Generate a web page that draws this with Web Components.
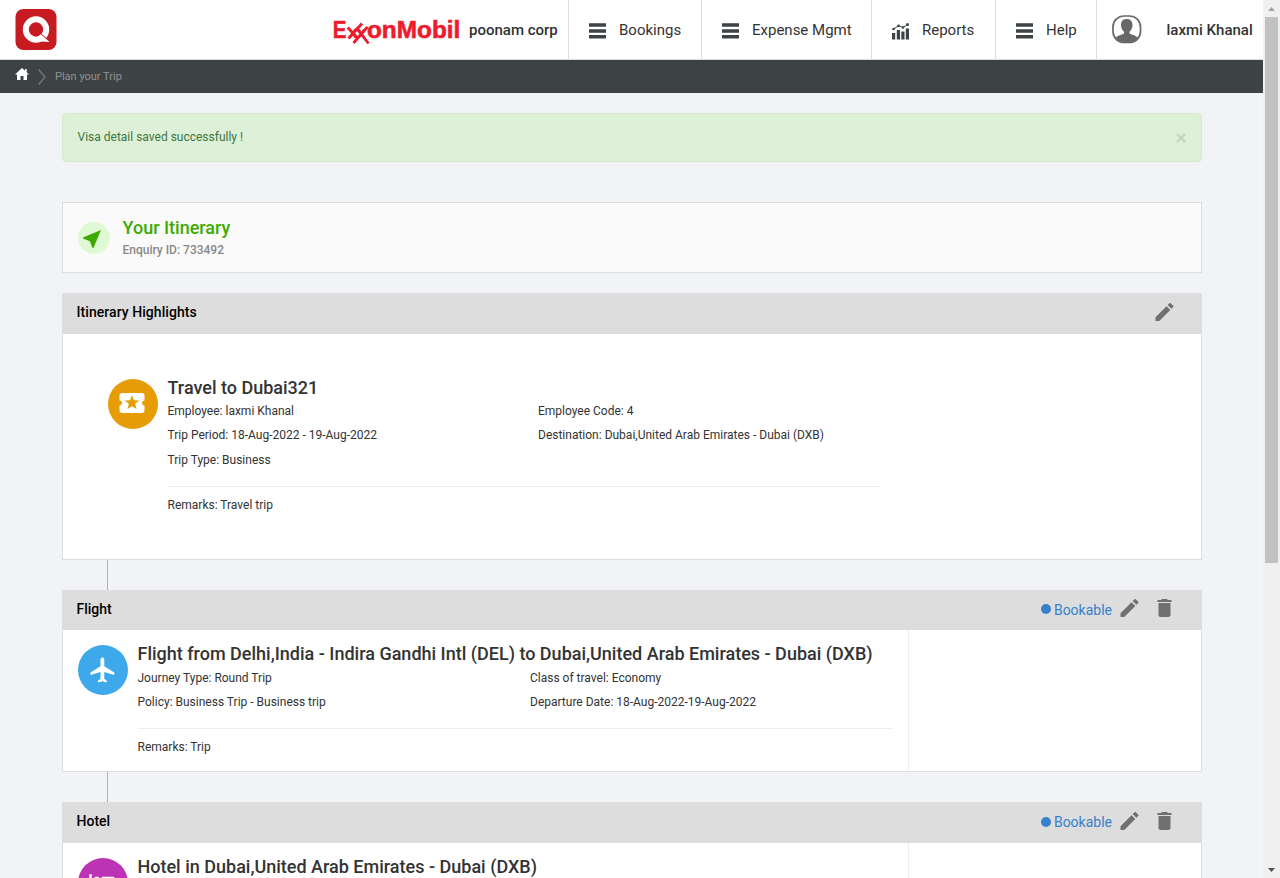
<!DOCTYPE html>
<html lang="en"><head><meta charset="utf-8"><title>Plan your Trip</title>
<style>
html,body{margin:0;height:878px;overflow:hidden}
body{background:#f2f3f7;font-family:Roboto,sans-serif;font-size:12px;color:#333;display:grid;grid-template-columns:1263px 17px}
main{padding:20px 61.5px 0;display:block}
.page{height:878px;overflow:hidden}
</style></head><body>
<div class="page">
<app-header></app-header>
<crumb-bar>Plan your Trip</crumb-bar>
<main>
<flash-alert>Visa detail saved successfully !</flash-alert>
<itinerary-title><span slot="title">Your Itinerary</span><span slot="sub">Enquiry ID: 733492</span></itinerary-title>
<trip-section label="Itinerary Highlights" wide style="--head:41px;--h:267px;--track:.06px">
  <trip-detail icon="ticket" color="#e69c05" col="370.5" heading="Travel to Dubai321">
    <span>Employee: laxmi Khanal</span><span>Employee Code: 4</span>
    <span>Trip Period: 18-Aug-2022 - 19-Aug-2022</span><span>Destination: Dubai,United Arab Emirates - Dubai (DXB)</span>
    <span>Trip Type: Business</span>
    <span slot="remarks">Remarks: Travel trip</span>
  </trip-detail>
</trip-section>
<trip-link></trip-link>
<trip-section label="Flight" bookable style="--head:40px;--h:182px;--drop:2px">
  <trip-detail icon="plane" color="#3ea9ea" col="392.5" heading="Flight from Delhi,India - Indira Gandhi Intl (DEL) to Dubai,United Arab Emirates - Dubai (DXB)">
    <span>Journey Type: Round Trip</span><span>Class of travel: Economy</span>
    <span>Policy: Business Trip - Business trip</span><span>Departure Date: 18-Aug-2022-19-Aug-2022</span>
    <span slot="remarks">Remarks: Trip</span>
  </trip-detail>
</trip-section>
<trip-link></trip-link>
<trip-section label="Hotel" bookable style="--head:41px;--h:182px">
  <trip-detail icon="hotel" color="#bd33b5" col="392.5" heading="Hotel in Dubai,United Arab Emirates - Dubai (DXB)"></trip-detail>
</trip-section>
</main>
</div>
<scroll-rail></scroll-rail>
<script>
const define = (name, render) => customElements.define(name, class extends HTMLElement {
  connectedCallback() {
    if (!this.shadowRoot) this.attachShadow({mode: 'open'}).innerHTML = render(this);
  }
});

const icons = {
  edit: '<path d="M3 17.25V21h3.75L17.81 9.94l-3.75-3.75L3 17.25zM20.71 7.04a1 1 0 0 0 0-1.41l-2.34-2.34a1 1 0 0 0-1.41 0l-1.83 1.83 3.75 3.75 1.83-1.83z"/>',
  trash: '<path d="M6 19c0 1.100.9 2 2 2h8c1.100 0 2-.9 2-2V7H6v12zM19 4h-3.500l-1-1h-5l-1 1H5v2h14V4z"/>',
  ticket: '<path fill-rule="evenodd" d="M20 12c0-1.100.9-2 2-2V6c0-1.100-.9-2-2-2H4c-1.100 0-1.990.9-1.990 2v4c1.100 0 1.990.9 1.990 2s-.89 2-2 2v4c0 1.100.9 2 2 2h16c1.100 0 2-.9 2-2v-4c-1.100 0-2-.9-2-2zm-4.420 4.800L12 14.500l-3.580 2.300 1.080-4.120-3.290-2.690 4.240-.25L12 5.800l1.540 3.950 4.240.25-3.290 2.690 1.090 4.110z"/>',
  plane: '<path d="M21 16v-2l-8-5V3.500c0-.83-.67-1.500-1.500-1.500S10 2.670 10 3.500V9l-8 5v2l8-2.500V19l-2 1.500V22l3.500-1 3.500 1v-1.500L13 19v-5.500l8 2.500z"/>',
  hotel: '<path d="M7 13c1.660 0 3-1.340 3-3S8.660 7 7 7s-3 1.340-3 3 1.340 3 3 3zm12-6h-8v7H3V5H1v15h2v-3h18v3h2v-9c0-2.210-1.790-4-4-4z"/>',
  near: '<path d="M21 3 3 10.530v.98l6.840 2.650L12.480 21h.98L21 3z"/>',
  bars: '<path fill="#3d4245" d="M0 .3h17v3.500H0zM0 6.200h17v3.500H0zM0 11.900h17v3.500H0z"/>',
  chart: '<path fill="#3d4245" d="M0 10h3.200v6.500H0zM4.800 7H8v9.500H4.800zM9.300 8.500h3.200v8H9.300zM13.800 5.500H17v11h-3.200z"/><path d="M1.500 6 6.500 2.700l4.500 1.800 4.500-3" fill="none" stroke="#3d4245"/><g fill="#3d4245"><circle cx="1.500" cy="6" r="1.300"/><circle cx="6.500" cy="2.700" r="1.300"/><circle cx="11" cy="4.500" r="1.300"/><circle cx="15.500" cy="1.500" r="1.500"/></g>'
};
const svg = (name, size, fill = 'currentColor') => `<svg width="${size}" height="${size}" viewBox="0 0 24 24" fill="${fill}">${icons[name]}</svg>`;

define('nav-item', el => `<style>
:host{display:flex;align-items:center;height:59px;border-left:1px solid #ddd;box-sizing:border-box;padding-left:20px;font-size:15px;color:#333}
svg{margin:2px 12px 0 0;display:block;flex:none;overflow:visible}
</style><svg width="18" height="16" viewBox="0 0 18 16">${icons[el.getAttribute('icon')]}</svg><slot></slot>`);

define('app-header', () => `<style>
:host{display:flex;height:59px;background:#fff;border-bottom:1px solid #ddd;font-size:15px;color:#333}
.logo{margin:8.500px 0 0 15px;display:block}
.brand{margin-left:auto;width:235px;display:flex;align-items:center;font-weight:500}
.brand svg{display:block;margin-right:9px;flex:none;overflow:visible}
.user{width:166px;border-left:1px solid #ddd;display:flex;align-items:center;font-weight:500;white-space:nowrap}
.user svg{margin:0 24.500px 0 15px;flex:none}
</style>
<svg class="logo" width="42" height="41" viewBox="0 0 42 41"><rect x=".5" width="41" height="41" rx="8" fill="#c61b20"/><circle cx="21" cy="20.500" r="10.200" fill="none" stroke="#fff" stroke-width="6"/><path d="M20 31c4 1.200 8.500 2 14.500 2L26 25z" fill="#fff"/><path d="m26 25 6 5" stroke="#c61b20" stroke-width="1"/></svg>
<div class="brand"><svg width="127" height="29" viewBox="0 0 127 29" fill="#ed1b2e" font-family="Liberation Sans" font-weight="700" font-size="24"><text x="-.2" y="23.300" textLength="13.700" lengthAdjust="spacingAndGlyphs" stroke="#ed1b2e" stroke-width=".5">E</text><text x="15" y="23.300" textLength="18" lengthAdjust="spacingAndGlyphs" font-size="17">xx</text><path d="M14.700 12.500 25 23.500M15.500 23.500 29 8.500M23 12.500l12.500 16M20.500 28 34.500 12" fill="none" stroke="#ed1b2e" stroke-width="2.800"/><text x="34" y="23.300" textLength="93.300" lengthAdjust="spacingAndGlyphs" stroke="#ed1b2e" stroke-width=".6">onMobil</text></svg><span>poonam corp</span></div>
<nav-item icon="bars" style="width:133px">Bookings</nav-item><nav-item icon="bars" style="width:170px">Expense Mgmt</nav-item><nav-item icon="chart" style="width:124px">Reports</nav-item><nav-item icon="bars" style="width:101px">Help</nav-item>
<div class="user"><svg width="30" height="29" viewBox="0 0 30 29"><rect x="1" y="1" width="27.500" height="26.500" rx="11" fill="#fff" stroke="#686868" stroke-width="1.700"/><path d="M14.700 4c-4 0-6 2.700-5.700 6.500.2 3 1.500 5 3 6.300v1.700c-2.500 1.500-6.500 1.800-8.200 4C6 26 9 27 12 27h6c3 0 6-1.500 7.700-4.500-1.700-2.200-5.700-2.500-8.200-4v-1.700c1.500-1.300 2.800-3.300 3-6.300C20.700 6.700 18.700 4 14.700 4z" fill="#686868"/></svg>laxmi Khanal</div>`);

define('crumb-bar', () => `<style>
:host{display:flex;height:33px;background:#3d4245;color:#909394;font-size:11px;line-height:33px;padding-left:15px}
svg{display:block}
</style><svg width="14" height="12" viewBox="0 0 14 12" fill="#fff" style="margin:8px 9px 0 0"><path d="M7 0 0 6.500h2V12h3.500V8h3v4H12V6.500h2L11.700 4.300V1H10v1.800z"/></svg><svg width="8" height="16" viewBox="0 0 8 16" style="margin:9px 9px 0 0"><path d="M.7.5 7 8 .7 15.500" fill="none" stroke="#74787a" stroke-width="1.300"/></svg><slot></slot>`);

define('flash-alert', () => `<style>
:host{display:flex;justify-content:space-between;height:49px;box-sizing:border-box;border:1px solid #d6e9c6;border-radius:4px;background:#dff0d8;color:#3c763d;line-height:46px;padding:0 15px 0 15px}
svg{margin-top:19px}
</style><span><slot></slot></span><svg width="10" height="10" viewBox="0 0 10 10"><path d="m1 1 8 8m0-8L1 9" stroke="#bfd8b8" stroke-width="2.400"/></svg>`);

define('itinerary-title', () => `<style>
:host{display:flex;height:71px;box-sizing:border-box;border:1px solid #ddd;background:#fafafa;margin:40px 0 20px;padding:0 15px}
.c{width:32px;height:32px;border-radius:50%;background:#e0f9d5;color:#3eab00;display:grid;place-items:center;margin:19px 13px 0 0}
.c svg{margin:2px 3px 0 0}
.t{font-size:18px;font-weight:500;color:#3eab00;line-height:24px;margin-top:13px;display:block}
.s{font-weight:500;color:#888;line-height:20px;display:block}
</style><div class="c">${svg('near', 24)}</div><div><span class="t"><slot name="title"></slot></span><span class="s"><slot name="sub"></slot></span></div>`);

define('trip-section', el => `<style>
:host{display:block;height:var(--h);box-sizing:border-box;border:1px solid #ddd;background:#fff;overflow:hidden}
header{height:calc(var(--head) - 1px);background:#ddd;display:flex;align-items:center;box-sizing:border-box;padding:0 24.500px 4.200px 14px;color:#000;font-size:14px;font-weight:500}
.l{padding-top:var(--drop, 0px);letter-spacing:var(--track, 0px)}
.a{margin-left:auto;display:flex;align-items:center;font-weight:400;color:#3780cc}
.a i{width:10px;height:10px;border-radius:50%;background:#3780cc;margin:2px 2.500px 0 0}
.a svg{color:#707070;display:block}
.a svg path{transform:translateX(.5px)}
.a svg + svg{margin-left:11px}
.a span{margin-right:5px;padding-top:calc(2px + var(--drop, 0px))}
.b{display:grid;grid-template-columns:845.500px 1fr;height:calc(var(--h) - var(--head) - 1px)}
:host([wide]) .b{padding:30px 0 0 30px;grid-template-columns:817px}
aside{border-left:1px solid #eee}
:host([wide]) aside{display:none}
</style><header><span class="l">${el.getAttribute('label')}</span><div class="a">${el.hasAttribute('bookable') ? '<i></i><span>Bookable</span>' : ''}${svg('edit', 24)}${el.hasAttribute('bookable') ? svg('trash', 24) : ''}</div></header><div class="b"><slot></slot><aside></aside></div>`);

define('trip-detail', el => {
  const ticket = el.getAttribute('icon') === 'ticket';
  return `<style>
:host{display:flex;padding:15px;gap:10px;line-height:24.250px;box-sizing:border-box}
.c{width:50px;height:50px;border-radius:50%;flex:none;background:${el.getAttribute('color')};color:#fff;display:grid;place-items:center}
.c svg{margin:${ticket ? '0 2px 2px 0' : 0}}
.m{width:${ticket ? 712 : 755}px;flex:none}
h3{margin:-3px 0 ${ticket ? -.85 : 0}px;font-size:18px;font-weight:500;line-height:24px;white-space:nowrap}
.g{display:grid;grid-template-columns:${el.getAttribute('col')}px 1fr;white-space:nowrap}
hr{margin:${ticket ? 14.05 : 13.8}px 0 6px;border:0;border-top:1px solid #eee}
</style><div class="c">${svg(el.getAttribute('icon'), 30)}</div><div class="m"><h3>${el.getAttribute('heading')}</h3><div class="g"><slot></slot></div><hr><slot name="remarks"></slot></div>`;
});

define('trip-link', () => `<style>:host{display:block;height:30px;width:0;margin-left:45px;border-left:1px solid #aeb0b5}</style>`);

define('scroll-rail', () => `<style>
:host{display:flex;flex-direction:column;align-items:center;height:878px;background:#f0f0f0}
i{width:13px;height:546px;background:#c1c1c1}
svg{display:block;width:17px;height:17px;flex:none}
svg:last-child{margin-top:auto}
</style><svg><path d="M5 11h7L8.500 7z" fill="#a3a3a3"/></svg><i></i><svg><path d="M5 7h7l-3.500 4z" fill="#505050"/></svg>`);
</script></body></html>
